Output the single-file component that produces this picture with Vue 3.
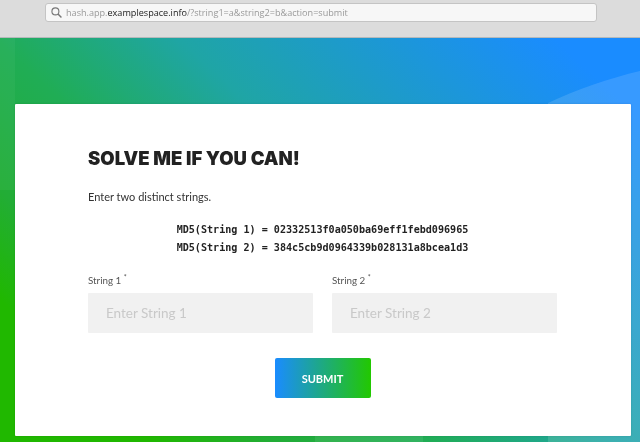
<script setup>
const fields = [
  { id: 's1', label: 'String 1', placeholder: 'Enter String 1' },
  { id: 's2', label: 'String 2', placeholder: 'Enter String 2' }
]
</script>

<template>
  <div class="window">
    <header class="toolbar">
      <div class="urlbar">
        <svg class="search" width="11" height="11" viewBox="0 0 12 12" fill="none" stroke="#777" stroke-width="1.2">
          <circle cx="4.8" cy="4.8" r="3.8" />
          <path d="M7.6 7.6L11.4 11.4" stroke-width="1.6" />
        </svg>
        <span class="url">hash.app.<b>examplespace.info</b>/?string1=a&amp;string2=b&amp;action=submit</span>
      </div>
    </header>
    <main class="page">
      <svg class="bg" viewBox="0 0 640 404" preserveAspectRatio="none">
        <defs>
          <linearGradient id="g" gradientUnits="userSpaceOnUse" x1="0" y1="262" x2="388" y2="-155">
            <stop offset="0" stop-color="#20b800" />
            <stop offset="0.14" stop-color="#22ad35" />
            <stop offset="0.33" stop-color="#20ad55" />
            <stop offset="0.55" stop-color="#1fa5a5" />
            <stop offset="1" stop-color="#1a8cff" />
          </linearGradient>
        </defs>
        <rect width="640" height="404" fill="url(#g)" />
        <path d="M548 65C575 52 610 40 640 33V404H548Z" fill="#fff" fill-opacity="0.13" />
        <rect x="0" y="0" width="15" height="152" fill="#fff" fill-opacity="0.04" />
        <rect x="315" y="398" width="108" height="6" fill="#fff" fill-opacity="0.08" />
      </svg>
      <form class="card" @submit.prevent>
        <h1>SOLVE ME IF YOU CAN!</h1>
        <p class="intro">Enter two distinct strings.</p>
        <pre class="hashes">MD5(String 1) = 02332513f0a050ba69eff1febd096965
MD5(String 2) = 384c5cb9d0964339b028131a8bcea1d3</pre>
        <div class="fields">
          <label v-for="f in fields" :key="f.id" class="field">
            <span class="lab">{{ f.label }} <sup>*</sup></span>
            <input type="text" :placeholder="f.placeholder" />
          </label>
        </div>
        <div class="actions"><button type="submit">SUBMIT</button></div>
      </form>
    </main>
  </div>
</template>

<style>
html, body { margin: 0; overflow: hidden; }
</style>

<style scoped>
.window { width: 640px; height: 442px; overflow: hidden; display: flex; flex-direction: column; font-family: Lato, "Open Sans", sans-serif; filter: blur(0.3px); }
.toolbar { height: 38px; flex: none; box-sizing: border-box; background: #dcdcdc; padding: 3px 43px 0 45px; border-bottom: 1px solid #b5b9bb; }
.urlbar { height: 19px; box-sizing: border-box; background: #f7f7f7; border: 1px solid #c4c4c4; border-radius: 3px; display: flex; align-items: center; padding-left: 5px; gap: 4px; }
.search { flex: none; }
.url { font: 9.1px "Open Sans", sans-serif; color: #999; white-space: nowrap; }
.url b { font-weight: 400; color: #222; }
.page { flex: 1; position: relative; padding: 66px 9px 6px 15px; box-sizing: border-box; display: flex; }
.bg { position: absolute; left: 0; top: 0; width: 100%; height: 100%; }
.card { position: relative; flex: 1; background: #fff; border-radius: 1px; box-shadow: 0 0 2px rgba(0,0,0,.15); padding: 42px 74px 0 73px; box-sizing: border-box; }
h1 { margin: 0; font: 900 18.5px/24px Inter, sans-serif; color: #222; }
.intro { margin: 20px 0 0; font-size: 11px; line-height: 14px; color: #333; }
.hashes { margin: 17px 0 0; font: 700 10.1px/18px "DejaVu Sans Mono", monospace; color: #222; text-align: center; }
.fields { display: flex; gap: 19px; margin-top: 17px; }
.field { flex: 1; display: flex; flex-direction: column; }
.lab { font-size: 9.8px; line-height: 12px; color: #555; margin-bottom: 7px; }
.lab sup { font-size: 7px; line-height: 0; }
input { height: 40px; box-sizing: border-box; width: 100%; border: 0; border-radius: 1px; background: #f1f1f1; padding: 0 18px; font: 13.5px Lato, sans-serif; outline: none; }
input::placeholder { color: #c9c9c9; opacity: 1; }
.actions { display: flex; justify-content: center; margin-top: 25px; }
button { width: 96px; height: 40px; border: 0; border-radius: 2px; color: #fff; font: 700 11px Lato, sans-serif; background: linear-gradient(90deg, #1a8cff, #22c800); }
</style>
